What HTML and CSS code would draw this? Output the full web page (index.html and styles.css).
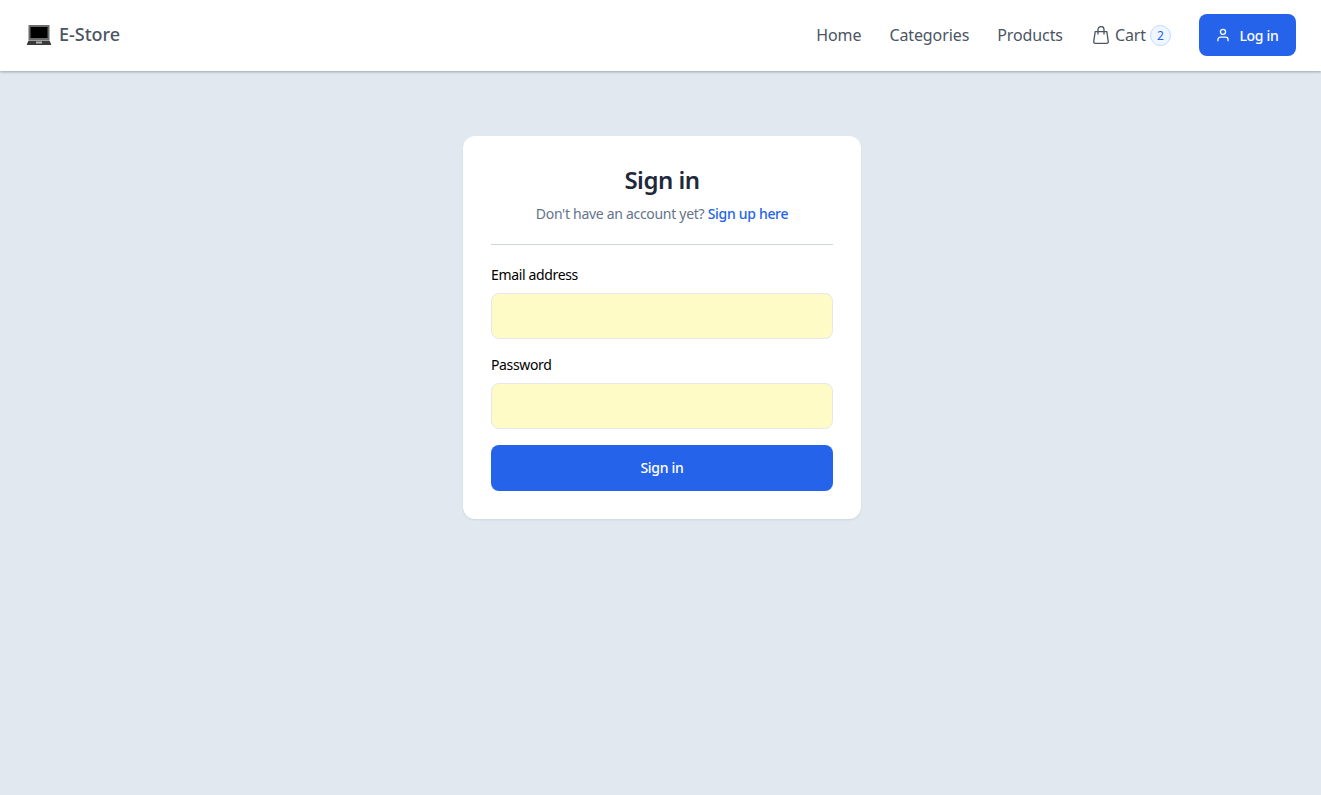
FILE: index.html
```html
<!DOCTYPE html>
<html lang="en">
<head>
    <meta charset="UTF-8">
    <meta name="viewport" content="width=device-width, initial-scale=1.0">
    <title>E-Store</title>
    <link rel="stylesheet" href="styles.css">
</head>
<body>
    <header class="navbar">
        <a class="brand" href="#">
            <svg class="brand-icon" viewBox="0 0 24 20">
                <rect x="1.5" y="0" width="21" height="15" rx="0.5" fill="#6b6b6b"/>
                <rect x="3.5" y="2" width="17" height="11" fill="#000"/>
                <path d="M1.5 15.5h21L24 19v1H0v-1z" fill="#3a3a3a"/>
                <rect x="9" y="16.5" width="6" height="2" fill="#b5b5b5"/>
            </svg>
            <span>E-Store</span>
        </a>
        <nav class="menu">
            <a class="menu-item" href="#">Home</a>
            <a class="menu-item" href="#">Categories</a>
            <a class="menu-item" href="#">Products</a>
            <a class="menu-item cart" href="#">
                <svg class="cart-icon" viewBox="0 0 16 18" fill="none" stroke="currentColor" stroke-width="1.3" stroke-linecap="round" stroke-linejoin="round">
                    <path d="M2.2 5.6h11.6l1.5 10a1.5 1.5 0 0 1-1.5 1.7H2.2a1.5 1.5 0 0 1-1.5-1.7l1.5-10z"/>
                    <path d="M5 8V3.6a3 3 0 0 1 6 0V8"/>
                </svg>
                <span>Cart</span>
                <span class="badge">2</span>
            </a>
            <a class="login-btn" href="#">
                <svg class="user-icon" viewBox="0 0 13 14" fill="none" stroke="currentColor" stroke-width="1.4" stroke-linecap="round">
                    <circle cx="6.5" cy="3.6" r="2.8"/>
                    <path d="M1 13.3v-1.2a2.8 2.8 0 0 1 2.8-2.8h5.4a2.8 2.8 0 0 1 2.8 2.8v1.2"/>
                </svg>
                <span>Log in</span>
            </a>
        </nav>
    </header>

    <main class="content">
        <section class="card">
            <h1 class="card-title">Sign in</h1>
            <p class="card-sub">Don't have an account yet? <a href="#">Sign up here</a></p>
            <hr class="divider">
            <form class="form">
                <label class="field">
                    <span class="field-label">Email address</span>
                    <input class="field-input" type="email">
                </label>
                <label class="field">
                    <span class="field-label">Password</span>
                    <input class="field-input" type="password">
                </label>
                <button class="submit-btn" type="button">Sign in</button>
            </form>
        </section>
    </main>
</body>
</html>
```

FILE: styles.css
```css
* {
    box-sizing: border-box;
}
html, body {
    margin: 0;
    padding: 0;
}
body {
    min-height: 795px;
    background-color: #e2e8f0;
    font-family: "Noto Sans", "Open Sans", sans-serif;
    color: #000;
}
a {
    text-decoration: none;
}
.navbar {
    display: flex;
    align-items: center;
    justify-content: space-between;
    height: 71px;
    padding: 0 25px 1px 27px;
    background-color: #fff;
    box-shadow: 0 1px 3px rgba(0, 0, 0, 0.2), 0 1px 2px rgba(0, 0, 0, 0.1);
}
.brand {
    display: flex;
    align-items: center;
    gap: 8px;
    font-size: 18px;
    line-height: 24px;
    font-weight: 500;
    color: #4b5563;
}
.brand span {
    position: relative;
    top: -1px;
}
.brand-icon {
    width: 24px;
    height: 20px;
}
.menu {
    display: flex;
    align-items: center;
    gap: 28px;
}
.menu-item {
    font-size: 16px;
    font-weight: 400;
    letter-spacing: -0.1px;
    color: #4b5563;
}
.cart {
    display: flex;
    align-items: center;
    gap: 4px;
    margin-left: 2px;
}
.cart-icon {
    width: 16px;
    height: 18px;
    margin-right: 2px;
}
.badge {
    display: flex;
    align-items: center;
    justify-content: center;
    width: 21px;
    height: 21px;
    border: 1px solid #bfdbfe;
    border-radius: 50%;
    background-color: #eff6ff;
    font-size: 12px;
    font-weight: 400;
    letter-spacing: 0;
    color: #2563eb;
}
.login-btn {
    display: flex;
    align-items: center;
    justify-content: center;
    gap: 10px;
    width: 97px;
    height: 42px;
    border-radius: 8px;
    background-color: #2563eb;
    font-size: 14px;
    font-weight: 500;
    letter-spacing: -0.3px;
    color: #fff;
}
.user-icon {
    width: 12px;
    height: 14px;
    margin-left: 1px;
}
.content {
    display: flex;
    justify-content: center;
    padding: 65px 0 0 3px;
}
.card {
    width: 398px;
    height: 383px;
    padding: 28px;
    border-radius: 12px;
    background-color: #fff;
    box-shadow: 0 1px 2px rgba(0, 0, 0, 0.08);
}
.card-title {
    margin: 0;
    font-size: 24px;
    line-height: 32px;
    font-weight: 600;
    letter-spacing: -0.5px;
    text-align: center;
    color: #1e293b;
}
.card-sub {
    margin: 8px 0 0;
    font-size: 14px;
    line-height: 20px;
    letter-spacing: -0.3px;
    text-align: center;
    color: #64748b;
}
.card-sub a {
    font-weight: 500;
    color: #2563eb;
}
.divider {
    margin: 20px 0 20px;
    border: 0;
    border-top: 1px solid #cbd5e1;
}
.form {
    display: flex;
    flex-direction: column;
    gap: 16px;
}
.field {
    display: block;
}
.field-label {
    display: block;
    margin-bottom: 8px;
    font-size: 14px;
    line-height: 20px;
    letter-spacing: -0.35px;
}
.field-input {
    display: block;
    width: 100%;
    height: 46px;
    border: 1px solid #e5e7eb;
    border-radius: 8px;
    background-color: #fefbc7;
    outline: none;
}
.submit-btn {
    height: 46px;
    padding-bottom: 2px;
    border: 0;
    border-radius: 8px;
    background-color: #2563eb;
    font-family: inherit;
    font-size: 14px;
    font-weight: 500;
    letter-spacing: -0.3px;
    color: #fff;
}
```
